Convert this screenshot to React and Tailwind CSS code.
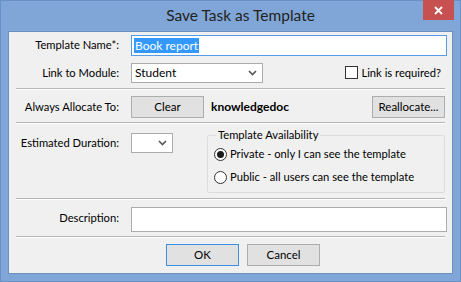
const font = { fontFamily: 'Lato, "Noto Sans", "Liberation Sans", sans-serif' }

function Chevron() {
  return (
    <svg width="9" height="6" viewBox="0 0 9 6" fill="none" stroke="#555" strokeWidth="1.6">
      <path d="M1 1l3.5 3.5L8 1" />
    </svg>
  )
}

function Separator({ className = '' }) {
  return <div className={`mx-[7px] h-[2px] border-t border-[#b4b4b4] border-b border-b-white ${className}`} />
}

function WinButton({ children, focused, className = '' }) {
  return (
    <button
      className={`h-[22px] w-[73px] shrink-0 bg-[#e1e1e1] border ${focused ? 'border-[#3c8ee5]' : 'border-[#adadad]'} text-[11.5px] text-black flex items-center justify-center whitespace-nowrap ${className}`}
    >
      {children}
    </button>
  )
}

function Radio({ checked, label }) {
  return (
    <label className="flex items-center h-[16px] gap-[3px] whitespace-nowrap">
      <span className="w-[13px] h-[13px] rounded-full border border-[#333] bg-white flex items-center justify-center">
        {checked && <span className="w-[7px] h-[7px] rounded-full bg-[#1a1a1a]" />}
      </span>
      <span className="text-[11.2px] text-black leading-none">{label}</span>
    </label>
  )
}

export default function App() {
  return (
    <div className="w-[461px] h-[282px] bg-[#7fa6d6] border border-[#6a91c4] flex flex-col text-black whitespace-nowrap" style={font}>
      {/* title bar */}
      <div className="relative h-[30px] flex items-center justify-center pl-[20px]">
        <span className="text-[15.5px] text-[#222] leading-none -mt-[1px]">Save Task as Template</span>
        <div className="absolute right-[6px] top-[-1px] w-[31px] h-[20px] bg-[#c75050] flex items-center justify-center">
          <svg width="9" height="9" viewBox="0 0 9 9" stroke="white" strokeWidth="1.8">
            <path d="M1 1l7 7M8 1l-7 7" />
          </svg>
        </div>
      </div>

      {/* client area */}
      <div className="flex-1 mx-[7px] mb-[7px] bg-[#f0f0f0] border border-[#6d90bf] flex flex-col text-[11.2px]">
        {/* template name */}
        <div className="flex items-center mt-[3px] h-[21px]">
          <span className="w-[110px] text-right">Template Name*:</span>
          <div className="ml-[12px] w-[316px] h-[21px] bg-white border border-[#569de5] flex items-center px-[2px]">
            <span className="bg-[#3399ff] text-white text-[12px] leading-[15px] px-[1px]">Book report</span>
          </div>
        </div>

        {/* link to module */}
        <div className="flex items-center mt-[7px] h-[20px]">
          <span className="w-[110px] text-right">Link to Module:</span>
          <div className="ml-[12px] w-[132px] h-[20px] bg-white border border-[#acacac] flex items-center justify-between pl-[3px] pr-[5px]">
            <span className="text-[12px]">Student</span>
            <Chevron />
          </div>
          <div className="ml-auto mr-[11px] flex items-center gap-[3px]">
            <span className="w-[13px] h-[13px] border border-[#333] bg-white" />
            <span>Link is required?</span>
          </div>
        </div>

        <Separator className="mt-[5px]" />

        {/* always allocate */}
        <div className="flex items-center mt-[6px] h-[22px]">
          <span className="w-[110px] text-right">Always Allocate To:</span>
          <WinButton className="ml-[12px]">Clear</WinButton>
          <span className="ml-[7px] font-bold text-[12px]">knowledgedoc</span>
          <WinButton className="ml-auto mr-[7px]">Reallocate...</WinButton>
        </div>

        <Separator className="mt-[4px]" />

        {/* duration + availability */}
        <div className="flex items-start mt-[3px]">
          <div className="flex items-center mt-[6px] h-[20px]">
            <span className="w-[110px] text-right">Estimated Duration:</span>
            <div className="ml-[12px] w-[42px] h-[20px] bg-white border border-[#acacac] flex items-center justify-end pr-[5px]">
              <Chevron />
            </div>
          </div>
          <fieldset className="ml-[34px] mr-[7px] flex-1 border border-[#dcdcdc] rounded-[2px] px-[6px] pb-[7px]">
            <legend className="ml-[2px] px-[2px] leading-[16px]">Template Availability</legend>
            <div className="flex flex-col gap-[7px] mt-[3px]">
              <Radio checked label="Private - only I can see the template" />
              <Radio label="Public - all users can see the template" />
            </div>
          </fieldset>
        </div>

        <Separator className="mt-[5px]" />

        {/* description */}
        <div className="flex items-start mt-[7px]">
          <span className="w-[110px] text-right mt-[3px]">Description:</span>
          <div className="ml-[12px] w-[316px] h-[25px] bg-white border border-[#acacac]" />
        </div>

        <Separator className="mt-[4px]" />

        <div className="flex mt-[6px] pl-[157px] gap-[8px]">
          <WinButton focused>OK</WinButton>
          <WinButton>Cancel</WinButton>
        </div>
      </div>
    </div>
  )
}
